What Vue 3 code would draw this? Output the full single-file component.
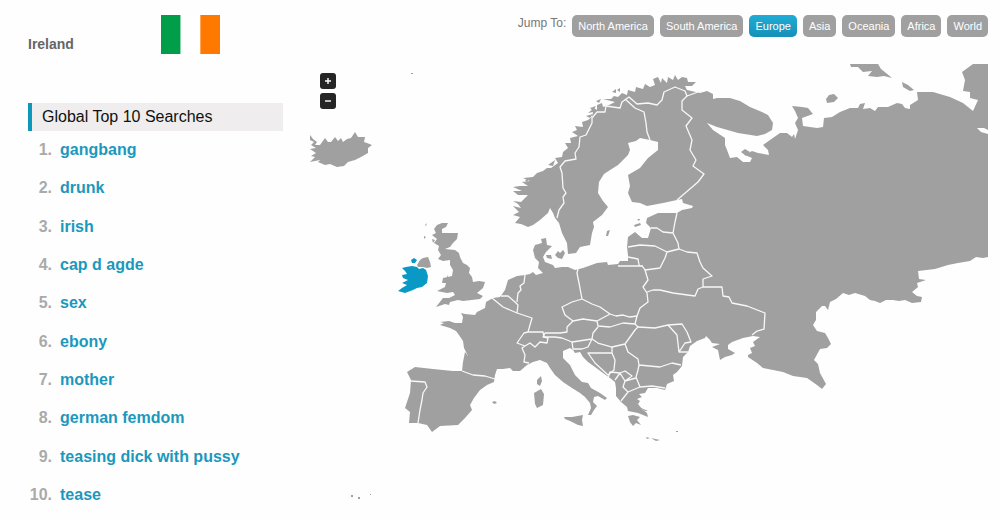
<template>
  <div class="page">
    <aside class="sidebar">
      <div class="country">
        <h1 class="country-name">Ireland</h1>
        <svg class="flag" viewBox="0 0 60 40" preserveAspectRatio="none" role="img" aria-label="Flag of Ireland">
          <rect width="20" height="40" fill="#009e49" />
          <rect x="20" width="20" height="40" fill="#fff" />
          <rect x="40" width="20" height="40" fill="#ff7900" />
        </svg>
      </div>
      <h2 class="list-title">Global Top 10 Searches</h2>
      <ol class="searches">
        <li v-for="(term, i) in searches" :key="term">
          <span class="rank">{{ i + 1 }}.</span>
          <a href="#">{{ term }}</a>
        </li>
      </ol>
    </aside>

    <main class="content">
      <nav class="jump">
        <span class="jump-label">Jump To:</span>
        <button
          v-for="region in regions"
          :key="region"
          type="button"
          :class="{ active: region === current }"
          @click="current = region"
        >{{ region }}</button>
      </nav>

      <div class="map-wrap">
        <svg class="map" viewBox="310 64 678 456" role="img" aria-label="Map of Europe">
          <path class="land" :d="mainland" />
          <path v-for="d in islands" :key="d" class="land" :d="d" />
          <path class="sea" :d="seas" />
          <path v-for="d in borders" :key="d" class="border" :d="d" />
          <path class="selected" :d="ireland" />
        </svg>
        <div class="zoom">
          <button type="button" aria-label="Zoom in">
            <svg viewBox="0 0 16 16"><path d="M5 8h6M8 5v6" /></svg>
          </button>
          <button type="button" aria-label="Zoom out">
            <svg viewBox="0 0 16 16"><path d="M5 8h6" /></svg>
          </button>
        </div>
      </div>
    </main>
  </div>
</template>

<script setup>
import { ref } from 'vue';

const searches = [
  'gangbang',
  'drunk',
  'irish',
  'cap d agde',
  'sex',
  'ebony',
  'mother',
  'german femdom',
  'teasing dick with pussy',
  'tease',
];

const regions = ['North America', 'South America', 'Europe', 'Asia', 'Oceania', 'Africa', 'World'];
const current = ref('Europe');

// Continental coast, clockwise pieces joined into one outline
const mainland = [
  // Caspian and Black Sea
  'M988 257L983 258 976 257 970 261 958 263 948 265 935 269 918 271 919 279 926 280 917 283 918 287 912 292 917 296 922 297 921 302 912 303 905 300 899 301 893 300 886 300 880 303 875 301 870 300 865 296 855 293 849 295 843 293 836 299 830 302 828 310 825 306 822 306 816 312 816 320 813 325 817 331 825 333 828 338 831 344 827 348 820 349 814 360 818 364 820 373 826 384 822 389 817 385 807 378 793 376 783 372 763 368 757 363 748 357 748 355 752 353 750 348 755 346 753 342 760 337 753 336 743 338 732 342 728 345 728 349 735 353 732 355 725 357 720 360 719 355 718 350 712 347 720 344 712 343 710 340 706 336 705 338 697 341 690 346 688 352 683 357 682 366 677 372 673 375 674 381 667 384 665 390',
  // Greece, Adriatic, Italy
  '657 388 648 388 645 393 639 394 642 397 637 399 640 401 638 404 642 409 647 413 648 417 638 413 628 411 627 407 621 402 616 396 616 388 615 382 610 378 603 373 595 367 588 362 583 357 580 352 575 353 573 350 570 348 563 351 563 358 570 365 575 375 582 382 588 383 591 388 600 393 607 398 605 400 598 396 594 397 593 402 597 406 594 410 591 415 588 415 591 408 590 403 585 397 580 393 572 388 563 382 555 375 550 368 547 363 540 360 533 362 527 365 520 371',
  // France and Iberia
  '513 371 510 368 503 369 497 369 495 375 494 382 487 385 480 390 474 398 470 405 472 410 465 418 458 425 440 426 432 432 427 425 418 423 409 423 410 412 405 408 410 393 411 380 407 372 415 367 433 369 453 371 462 371 463 362 465 352 468 356 464 348 463 341 459 335 456 331 450 328 440 325 444 323 440 322 449 321 455 323 462 323 463 317 461 313 465 314 475 315 477 312 485 308 486 302 493 298 500 297',
  // North Sea, Denmark, Baltic
  '505 290 508 280 517 276 525 275 530 274 533 272 536 275 543 273 538 268 539 262 535 258 533 250 535 245 542 243 541 239 546 238 547 245 552 246 546 252 543 257 545 262 553 265 555 268 562 267 568 267 575 270 583 268 597 263 607 262 608 265 618 264 620 261 628 261 628 255 627 247 628 237 635 232 642 238 648 238 651 228 646 223 647 218 658 213 677 213 682 210 692 208 693 206 683 203 682 199 677 200 663 203 647 206 640 203 632 202 628 193 630 186 628 175 640 168 648 158 658 150 658 142 650 140 640 138 636 141 628 143 630 150 628 155 618 165 607 172 604 174 599 182 598 193 603 201 608 207 602 215 593 222 594 227 592 233 590 245 580 247 576 253 568 254 567 243 562 233 559 223 555 218 553 213 550 208 548 213 540 220 533 225 528 227 521 224 515 223',
  // Norway
  '520 217 513 215 519 212 513 206 521 208 518 204 513 201 521 202 528 195 518 195 513 191 522 191 513 187 520 186 528 186 522 182 530 181 523 178 533 177 537 173 543 171 547 168 551 168 558 163 555 158 562 157 563 152 568 148 565 143 571 143 570 138 578 136 572 132 577 130 575 126 583 127 582 122 588 120 592 117 593 112 588 113 594 108 597 110 597 105 602 103 603 107 609 105 615 102 603 99 611 99 614 96 618 97 622 93 627 95 628 90 635 92 636 87 643 89 645 84 650 87 655 85 653 79 658 77 661 83 662 78 667 83 668 77 673 80 675 75 678 80 682 77 687 78 688 82 696 82 692 86 685 86 687 90',
  // Kola, White Sea, Barents coast
  '700 93 707 91 713 94 713 99 717 98 730 98 740 101 750 107 762 112 768 115 773 123 772 130 765 134 757 136 738 133 717 127 707 123 713 130 725 138 725 145 727 150 730 158 737 157 743 162 750 162 752 158 745 155 752 151 758 153 769 155 768 150 763 145 770 140 780 133 787 133 792 137 794 134 795 139 798 130 795 123 798 118 795 111 792 106 802 107 808 108 813 114 802 118 803 126 817 128 823 127 824 118 832 117 840 112 850 108 858 108 860 104 865 103 863 109 870 108 875 111 878 107 888 107 897 103 902 104 905 108 910 109 910 105 918 100 917 92 933 92 950 97 963 103 973 111 978 100 970 98 970 92 963 91 965 80 962 72 973 64 988 64Z',
].join(' ');

const islands = [
  // Iceland
  'M310 135L313 139 317 142 315 145 320 145 325 138 328 142 331 142 335 137 338 141 341 138 343 142 347 139 351 138 353 135 355 132 358 137 360 137 365 137 364 142 367 143 372 145 368 148 368 153 361 157 355 160 348 162 344 166 337 167 330 164 325 165 318 162 320 160 310 162 315 157 311 156 316 153 310 149 316 148 311 145 314 142 310 140Z',
  // Great Britain and Northern Ireland
  'M437 225L442 223 448 223 446 227 442 229 442 233 458 233 457 239 453 243 450 247 445 249 455 250 459 253 460 257 463 263 467 265 470 268 469 273 472 277 473 282 479 281 485 282 483 288 477 293 483 296 480 299 463 301 458 300 450 302 449 305 445 304 436 307 443 298 449 298 455 295 453 292 447 293 437 291 445 287 446 283 442 283 443 278 452 276 453 270 450 265 450 260 443 261 438 259 441 255 438 250 439 246 434 243 437 239 432 235 436 233 434 229Z',
  'M417 265L420 260 423 258 428 257 430 262 431 267 427 268 423 267 418 267Z',
  'M425 225l2 -2 -1 3zM424 236l2 1 -2 2zM432 239l3 1 -2 3zM447 275l1 2 -1 1z',
  // Arctic islands
  'M850 64H878L881 69 886 73 892 78 884 76 877 77 868 76 872 71 863 72 858 67 851 67Z',
  'M902 82L908 85 914 90 910 91 903 87Z',
  'M826 99L829 95 834 94 838 98 834 102 827 103Z',
  'M741 152l4 -3 5 3 -4 4z',
  // Baltic
  'M606 236l1 -5 3 -1 -2 6zM634 225l6 -2 1 2 -6 2zM637 219l3 0 -1 2zM546 255l5 0 1 4 -5 -1zM555 255l3 -4 2 2 3 -3 2 3 -3 6 -4 -1z',
  // Lofoten and the Norwegian skerries
  'M586 116l7 -2 -3 4zM590 108l6 -2 -3 5zM596 101l5 -2 -2 4zM612 92l4 -3 0 4zM617 90l3 -2 0 4zM548 165l7 -5 -2 6zM525 180l5 -2 -3 4z',
  // Mediterranean
  'M537 380L541 376 542 381 540 386 537 384Z',
  'M534 393L541 389 544 394 543 405 537 408 535 404Z',
  'M564 417L572 417 583 415 582 420 583 426 578 425 570 421 565 419Z',
  'M628 416L633 415 640 417 637 420 641 425 636 423 633 426 630 422Z',
  'M639 407l9 4 -3 0zM646 437l4 1 -3 1zM651 438l9 2 -4 1zM676 431h2v1h-2zM492 402l3 -1 2 2 -3 1z',
  // Atlantic specks
  'M411 73h2v1h-2zM351 495h2v2h-2zM358 497h2v2h-2zM370 494h1v1h-1z',
];

const seas = 'M977 128L984 128 988 130V134L981 132Z';

const ireland =
  'M411 260L414 258 417 260 415 263 412 263ZM402 268L406 267 412 266 417 267 419 269 423 268 426 270 428 276 427 283 422 287 417 288 413 290 405 293 398 291 402 288 407 285 402 283 408 280 403 278 402 275 407 274 405 271Z';

const borders = [
  // Scandinavia
  'M557 218L559 210 564 203 563 197 566 193 563 188 562 173 560 167 565 161 576 159 575 153 579 147 580 137 586 135 592 123 592 118 597 112 605 112 606 106 620 108 622 102 629 97 637 104 648 103 657 105 662 100 664 92 675 87 685 91 687 96 698 92',
  'M625 99L635 108 644 112 646 123 647 132 650 140',
  'M687 96L682 101 682 110 692 118 686 126 692 140 690 150 696 160 693 166 704 174 698 182 677 200',
  // Baltics, Belarus, Ukraine
  'M677 213L675 222 673 233 678 243 679 249 667 252 655 246 640 245 628 247M651 228L657 228 663 232 673 233M667 252L665 258 660 268 645 270',
  'M628 257L638 259 639 265 643 267 645 270 648 280 643 287 647 293 648 302 640 308 637 316M618 266H643',
  'M647 292L653 290 660 290 673 293 695 296 698 289 703 287 722 287 723 296 729 297 732 303 747 306 765 313 764 329 757 331 752 335',
  'M679 249L687 252 697 253 700 262 703 268 712 276 703 279 703 287',
  // Central Europe
  'M578 269L577 273 579 283 582 299 572 302 562 307 565 315 573 321 583 319 597 321 610 314 600 307 592 304 582 299M610 314L616 316 623 315 630 317 637 316 635 324 623 323 610 327 598 326 597 321',
  'M573 321L567 327 567 332 560 333 545 333 543 337 555 337 562 338 572 342 592 339 593 333 598 327M592 339L598 343 612 347 625 344 635 330 638 327 635 324',
  'M492 298L503 307 517 313 532 318 528 332 543 332 544 337 548 338 547 343 540 342 535 347 530 343 525 346 517 343 524 333 528 332M525 346L522 348 525 355 524 362 529 363',
  'M501 296L508 296 515 302 518 305 517 313M517 302L518 293 521 290 520 286 524 283 525 275',
  // Balkans and Romania
  'M638 327L655 328 668 325 677 335 679 352 688 352M668 325L682 324 687 332 691 342 685 343 679 352',
  'M625 344L628 352 638 359 639 365 660 367 672 363 681 365M639 365L638 370 636 377 640 387 652 386 665 388',
  'M572 342L573 349 582 349 588 347 592 339M612 347L612 353 588 353 595 363 608 375 614 370 615 360 612 353',
  'M608 378L610 372 620 373 615 380M620 373L625 371 632 376 625 381 620 373M625 381L636 378M625 381L623 387 628 392 640 387M628 392L621 401',
  // Iberia
  'M462 371L473 375 485 376 495 379M411 381L425 382 427 387 423 393 422 400 420 410 418 423',
];
</script>

<style>
body {
  margin: 0;
  background: #fefefe;
}
</style>

<style scoped>
.page {
  display: flex;
  min-height: 100vh;
  box-sizing: border-box;
  padding: 15px 12px 0 28px;
  gap: 27px;
  font-family: "Liberation Sans", Arial, sans-serif;
}
.sidebar {
  flex: 0 0 255px;
  display: flex;
  flex-direction: column;
  padding-bottom: 7px;
}
.country {
  display: flex;
  align-items: flex-end;
  height: 39px;
  margin-bottom: 49px;
}
.country-name {
  width: 133px;
  margin: 0;
  font-size: 14px;
  line-height: 20px;
  color: #666;
}
.flag {
  width: 59px;
  height: 39px;
}
.list-title {
  margin: 0;
  padding-left: 10px;
  border-left: 4px solid #0d98ba;
  background: #efeded;
  font-size: 16px;
  font-weight: normal;
  line-height: 28px;
  color: #111;
}
.searches {
  flex: 1;
  display: flex;
  flex-direction: column;
  margin: 0;
  padding: 0;
  list-style: none;
  font-size: 16px;
  font-weight: bold;
}
.searches li {
  flex: 1;
  display: flex;
  align-items: center;
  gap: 8px;
}
.rank {
  width: 24px;
  text-align: right;
  color: #aaa;
}
.searches a {
  color: #1b98bd;
  text-decoration: none;
}
.content {
  flex: 1;
  min-width: 0;
}
.jump {
  display: flex;
  justify-content: flex-end;
  gap: 6px;
  margin-bottom: 27px;
}
.jump-label {
  font-size: 12px;
  line-height: 16px;
  color: #777;
}
.jump button {
  height: 22px;
  padding: 0 6px;
  border: 0;
  border-radius: 5px;
  background: #a0a0a0;
  color: #fff;
  font-family: inherit;
  font-size: 11px;
  line-height: 22px;
  cursor: pointer;
}
.jump button.active {
  background: linear-gradient(#20acd5, #1590b8);
}
.map-wrap {
  position: relative;
}
.map {
  display: block;
  width: 100%;
}
.land {
  fill: #a0a0a0;
}
.sea {
  fill: #fefefe;
}
.border {
  fill: none;
  stroke: #f8f8f8;
  stroke-width: 1.3;
  stroke-linejoin: round;
}
.selected {
  fill: #0a98c5;
}
.zoom {
  position: absolute;
  top: 9px;
  left: 10px;
  display: flex;
  flex-direction: column;
  gap: 4px;
}
.zoom button {
  width: 16px;
  height: 16px;
  padding: 0;
  border: 0;
  border-radius: 3px;
  background: #252525;
  cursor: pointer;
}
.zoom svg {
  display: block;
}
.zoom path {
  stroke: #fff;
  stroke-width: 1.4;
}
</style>
